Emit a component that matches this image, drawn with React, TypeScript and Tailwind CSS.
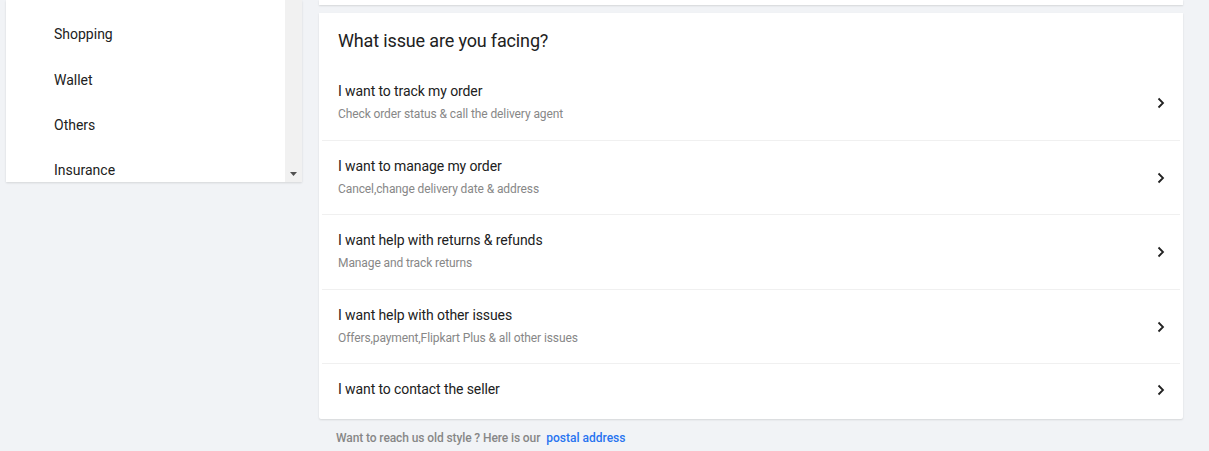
export default function App() {
  const issues = [
    { title: "I want to track my order", sub: "Check order status & call the delivery agent" },
    { title: "I want to manage my order", sub: "Cancel,change delivery date & address" },
    { title: "I want help with returns & refunds", sub: "Manage and track returns" },
    { title: "I want help with other issues", sub: "Offers,payment,Flipkart Plus & all other issues" },
    { title: "I want to contact the seller" },
  ];

  return (
    <div
      className="min-h-[451px] w-[1209px] bg-[#f1f3f6] flex gap-[17px] pl-[6px]"
      style={{ fontFamily: "Roboto, 'Liberation Sans', sans-serif" }}
    >
      {/* left category panel */}
      <div className="w-[296px] h-[182px] bg-white shadow-[0_1px_2px_rgba(0,0,0,0.12)] flex">
        <div className="flex-1 overflow-hidden pt-[12px] pl-[48px]">
          {["Shopping", "Wallet", "Others", "Insurance"].map((c) => (
            <div key={c} className="h-[45.4px] flex items-center text-[14px] text-[#212121]">
              {c}
            </div>
          ))}
        </div>
        <div className="w-[17px] bg-[#f1f1f1] flex flex-col justify-end items-center pb-[6px]">
          <svg width="7" height="4" viewBox="0 0 7 4">
            <path d="M0 0h7L3.5 4z" fill="#505050" />
          </svg>
        </div>
      </div>

      {/* right column */}
      <div className="w-[864px] flex flex-col">
        <div className="h-[5px] bg-white shadow-[0_1px_2px_rgba(0,0,0,0.12)]" />
        <div className="mt-[8px] bg-white rounded-b-[2px] shadow-[0_1px_2px_rgba(0,0,0,0.12)]">
          <div className="h-[53px] pl-[19px] pt-[16px] text-[18px] leading-[24px] tracking-[-0.15px] text-[#212121]">
            What issue are you facing?
          </div>
          {issues.map((it, i) => (
            <div key={it.title}>
              <div
                className={`flex items-center justify-between pl-[19px] pr-[18px] pt-[16px] ${
                  it.sub ? "pb-[17.5px]" : "pb-[21px]"
                }`}
              >
                <div className="tracking-[-0.1px]">
                  <div className="text-[14px] leading-[18px] text-[#212121]">{it.title}</div>
                  {it.sub && (
                    <div className="mt-[6px] text-[12px] leading-[16px] text-[#878787]">{it.sub}</div>
                  )}
                </div>
                <svg width="8" height="12" viewBox="0 0 8 12" className="mt-[2px]">
                  <path d="M1.5 1.5L6 6l-4.5 4.5" fill="none" stroke="#212121" strokeWidth="1.8" />
                </svg>
              </div>
              {i < issues.length - 1 && <div className="mx-[3px] h-px bg-[#f0f0f0]" />}
            </div>
          ))}
        </div>
        <div className="pl-[17px] pt-[10px] text-[12px] font-medium text-[#878787]">
          <span className="tracking-[-0.1px]">Want to reach us old style ? Here is our</span>
          <span className="ml-[6px] text-[#2874f0]">postal address</span>
        </div>
      </div>
    </div>
  );
}
